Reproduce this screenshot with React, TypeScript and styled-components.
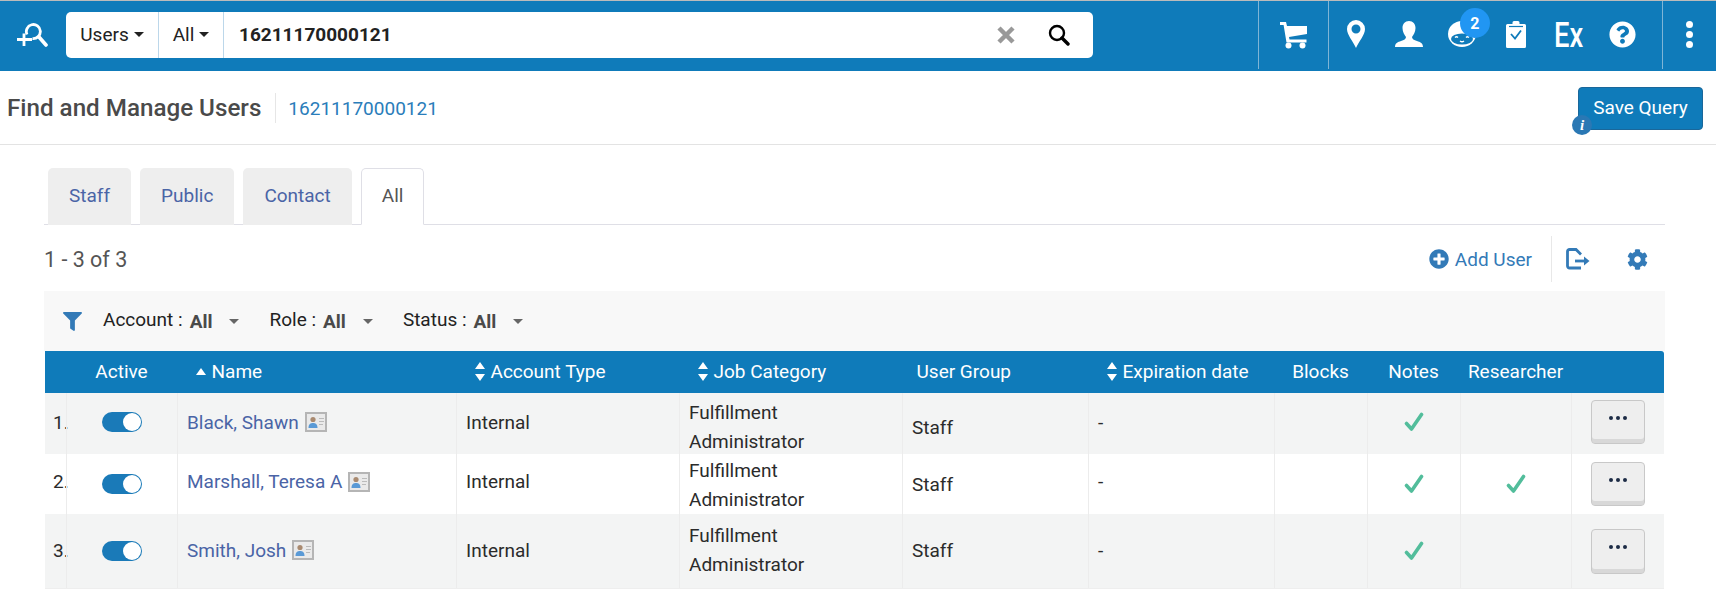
import React from "react";
import styled, { createGlobalStyle } from "styled-components";
import { FaCog, FaFilter, FaPlusCircle, FaQuestionCircle } from "react-icons/fa";

const blue = "#0f7bba";
const link = "#4a64a6";
const columns = "21px 111px 279px 223px 223px 186px 186px 93px 93px 111px 93px";

const GlobalStyle = createGlobalStyle`
  html, body {
    margin: 0;
    background: #fff;
    font-family: Roboto, "Liberation Sans", sans-serif;
    font-size: 19px;
    color: #333;
    overflow: hidden;
  }
`;

const TopBar = styled.header`
  display: flex;
  align-items: stretch;
  height: 70px;
  background: ${blue};
  border-top: 1px solid #bbb;
`;

const LogoCell = styled.div`
  width: 66px;
  display: flex;
  align-items: center;
  padding-left: 16px;
  box-sizing: border-box;
`;

const SearchBox = styled.div`
  align-self: flex-start;
  margin-top: 11px;
  width: 1027px;
  height: 46px;
  display: flex;
  align-items: stretch;
  background: #fff;
  border-radius: 5px;
`;

const ScopeSelect = styled.div<{ $width: number }>`
  width: ${(p) => p.$width}px;
  box-sizing: border-box;
  display: flex;
  align-items: center;
  justify-content: center;
  gap: 5px;
  padding-bottom: 2px;
  color: #222;
  border-right: 1px solid #bcd7ea;
`;

const SearchValue = styled.div`
  flex: 1;
  padding: 0 0 2px 15px;
  display: flex;
  align-items: center;
  font-weight: 700;
  color: #222;
`;

const SearchActions = styled.div`
  display: flex;
  align-items: center;
  gap: 33px;
  padding-right: 23px;
`;

const Spacer = styled.div`
  flex: 1;
`;

const BarCell = styled.div<{ $width: number; $divider?: boolean }>`
  position: relative;
  width: ${(p) => p.$width}px;
  display: flex;
  align-items: center;
  justify-content: center;
  color: #fff;
  margin-bottom: 2px;
  ${(p) => p.$divider && "border-left: 1px solid #7fb5d6; box-sizing: border-box;"}
`;

const BarGroup = styled.div`
  display: flex;
  padding-right: 13.4px;
  border-left: 1px solid #7fb5d6;
  margin-bottom: 2px;
`;

const Badge = styled.span`
  position: absolute;
  top: 7px;
  left: 24px;
  width: 30px;
  height: 30px;
  border-radius: 50%;
  background: #2196f3;
  color: #fff;
  font-size: 16px;
  font-weight: 700;
  display: flex;
  align-items: center;
  justify-content: center;
`;

const ExMark = styled.span`
  display: block;
  font-size: 35px;
  font-weight: 500;
  line-height: 35px;
  transform: scaleX(0.78);
  margin-top: 2px;
`;

const Dots = styled.div`
  display: flex;
  flex-direction: column;
  gap: 3px;
  margin-top: -2px;

  span {
    width: 7px;
    height: 7px;
    border-radius: 50%;
    background: #fff;
  }
`;

const SubHeader = styled.div`
  height: 73px;
  display: flex;
  align-items: center;
  padding: 0 13px 0 7px;
  border-bottom: 1px solid #e3e3e3;
`;

const Title = styled.h1`
  margin: 0;
  padding-right: 14px;
  font-size: 24.2px;
  font-weight: 500;
  line-height: 30px;
  color: #4a4a4a;
  border-right: 1px solid #e6e6e6;
`;

const QueryText = styled.span`
  margin: 2px 0 0 12px;
  flex: 1;
  color: #2a7dba;
`;

const SaveButton = styled.button`
  position: relative;
  width: 125px;
  height: 43px;
  margin-top: 1px;
  padding: 0 0 2px;
  background: ${blue};
  color: #fff;
  border: 1px solid #1a679a;
  border-radius: 4px;
  font: inherit;
`;

const InfoDot = styled.span`
  position: absolute;
  left: -7px;
  bottom: -6px;
  width: 20px;
  height: 20px;
  border-radius: 50%;
  background: #2a78b4;
  color: #fff;
  font: italic 700 15px/20px "Liberation Serif", serif;
  text-align: center;
`;

const Content = styled.main`
  margin: 23px 0 0 44px;
  width: 1621px;
`;

const TabBar = styled.nav`
  display: flex;
  gap: 9px;
  height: 56px;
  padding-left: 4px;
  border-bottom: 1px solid #dfdfe6;
`;

const Tab = styled.div<{ $active?: boolean }>`
  height: 57px;
  box-sizing: border-box;
  padding: 0 ${(p) => (p.$active ? 20 : 21)}px 2px;
  display: flex;
  align-items: center;
  border-radius: 5px 5px 0 0;
  background: ${(p) => (p.$active ? "#fff" : "#eee")};
  color: ${(p) => (p.$active ? "#555" : link)};
  border: ${(p) => (p.$active ? "1px solid #dfdfe6" : "0")};
  border-bottom: ${(p) => (p.$active ? "1px solid #fff" : "0")};
`;

const SummaryRow = styled.div`
  height: 64px;
  padding-top: 2px;
  display: flex;
  align-items: center;
  justify-content: space-between;
`;

const Count = styled.span`
  font-size: 21.5px;
  color: #555;
`;

const Actions = styled.div`
  display: flex;
  align-items: center;
  color: #337ab7;
`;

const AddUser = styled.span`
  display: flex;
  align-items: center;
  gap: 6px;
  padding-right: 19px;
  height: 46px;
  border-right: 1px solid #e8e8e8;
`;

const ActionIcon = styled.span<{ $width: number; $left?: number }>`
  width: ${(p) => p.$width}px;
  margin-left: ${(p) => p.$left ?? 0}px;
  display: flex;
  justify-content: center;
`;

const FilterBar = styled.div`
  height: 60px;
  box-sizing: border-box;
  display: flex;
  align-items: center;
  padding: 0 0 3px 19px;
  background: #f8f8f8;
  color: #222;
`;

const FilterIcon = styled(FaFilter)`
  margin: 3px 21px 0 0;
  color: #337ab7;
`;

const FilterItem = styled.div`
  display: flex;
  align-items: center;
  gap: 5px;
  margin-right: 30px;

  b {
    color: #4a4a4a;
    font-weight: 700;
    margin: 3px 0 0 2px;
  }
`;

const Caret = styled.span<{ $color?: string; $gap?: number; $drop?: number }>`
  display: inline-block;
  width: 0;
  height: 0;
  margin-left: ${(p) => p.$gap ?? 0}px;
  margin-top: ${(p) => p.$drop ?? 0}px;
  border-left: 5px solid transparent;
  border-right: 5px solid transparent;
  border-top: 5px solid ${(p) => p.$color ?? "#222"};
`;

const Table = styled.div`
  margin-left: 1px;
  width: 1619px;
`;

const HeadRow = styled.div`
  display: grid;
  grid-template-columns: ${columns};
  height: 42px;
  background: ${blue};
  border-radius: 0 3px 0 0;
  color: #fff;
`;

const HeadCell = styled.div<{ $center?: boolean; $pad?: number }>`
  display: flex;
  align-items: center;
  gap: 6px;
  white-space: nowrap;
  padding-bottom: 2px;
  justify-content: ${(p) => (p.$center ? "center" : "flex-start")};
  padding-left: ${(p) => p.$pad ?? 0}px;
`;

const BodyRow = styled.div<{ $height: number; $odd: boolean }>`
  display: grid;
  grid-template-columns: ${columns};
  height: ${(p) => p.$height}px;
  background: ${(p) => (p.$odd ? "#f3f4f4" : "#fff")};
  &:last-child {
    border-bottom: 1px solid #eee;
  }
`;

const Cell = styled.div<{ $center?: boolean; $shift?: number; $first?: boolean }>`
  min-width: 0;
  box-sizing: border-box;
  display: flex;
  align-items: center;
  justify-content: ${(p) => (p.$center ? "center" : "flex-start")};
  padding-left: ${(p) => (p.$center ? 0 : p.$first ? 8 : 9)}px;
  padding-top: ${(p) => Math.max(p.$shift ?? 0, 0)}px;
  padding-bottom: ${(p) => Math.max(-(p.$shift ?? 0), 0)}px;
  border-left: ${(p) => (p.$first ? "0" : "1px solid #ececec")};
  color: #2b2b2b;
  white-space: nowrap;
`;

const JobText = styled.div`
  line-height: 29px;
`;

const NameLink = styled.span`
  color: ${link};
  margin-right: 6px;
`;

const Toggle = styled.span`
  display: flex;
  justify-content: flex-end;
  align-items: center;
  width: 40px;
  height: 20px;
  box-sizing: border-box;
  padding-right: 1px;
  border-radius: 10px;
  background: #1a7ab8;

  &::after {
    content: "";
    width: 18px;
    height: 18px;
    border-radius: 50%;
    background: #fff;
  }
`;

const MoreButton = styled.button<{ $height: number }>`
  width: 54px;
  height: ${(p) => p.$height}px;
  padding: 0 0 8px;
  background: #eee;
  border: 1px solid #c8c8c8;
  border-radius: 4px;
  box-shadow: inset 0 -4px 0 #d8d8d8;
  display: flex;
  align-items: center;
  justify-content: center;
  gap: 3px;

  span {
    width: 4px;
    height: 4px;
    border-radius: 50%;
    background: #1c2b45;
  }
`;

const LogoIcon = () => (
  <svg width="32" height="26" viewBox="0 0 32 26" fill="none" stroke="#fff" strokeWidth="2.800">
    <path d="M1 16.500h15M8 10.500v12.500" />
    <path d="M11 11.500A7 7 0 1 1 16.500 15.500" />
    <path d="M23 14l7 8" strokeLinecap="round" strokeWidth="3.600" />
  </svg>
);

const ClearIcon = () => (
  <svg width="18" height="18" viewBox="0 0 18 18" stroke="#999" strokeWidth="4.500">
    <path d="M2 2l14 14M16 2L2 16" />
  </svg>
);

const SearchIcon = () => (
  <svg width="22" height="22" viewBox="0 0 22 22" fill="none" stroke="#000">
    <circle cx="9" cy="9" r="7" strokeWidth="2.400" />
    <path d="M14 14l6 6" strokeWidth="3.400" strokeLinecap="round" />
  </svg>
);

const CartIcon = () => (
  <svg width="28" height="28" viewBox="0 0 28 28" fill="#fff">
    <path d="M0 1h6l1 4h20v8l-18 3 .5 2.500h17v3H6.500L3.600 4H0z" />
    <circle cx="8.500" cy="24.500" r="3" />
    <circle cx="22.500" cy="24.500" r="3" />
  </svg>
);

const PinIcon = () => (
  <svg width="18" height="28" viewBox="0 0 18 28" fill="#fff">
    <path
      fillRule="evenodd"
      d="M9 0a9 9 0 0 1 9 9c0 6-6 12-9 19C6 21 0 15 0 9a9 9 0 0 1 9-9zm0 4.500a4.500 4.500 0 1 0 0 9 4.500 4.500 0 0 0 0-9z"
    />
  </svg>
);

const PersonIcon = () => (
  <svg width="28" height="26" viewBox="0 0 28 26" fill="#fff">
    <path d="M14 0c4 0 6.500 3 6.500 7 0 4-2 7-3.500 9 0 2 2 3 5 4 3 1 6 2 6 6H0c0-4 3-5 6-6 3-1 5-2 5-4-1.500-2-3.500-5-3.500-9 0-4 2.500-7 6.500-7z" />
  </svg>
);

const FaceIcon = () => (
  <svg width="28" height="26" viewBox="0 0 28 26">
    <ellipse cx="14" cy="13" rx="14" ry="13" fill="#fff" />
    <ellipse cx="14" cy="18" rx="11" ry="5.500" fill={blue} />
    <path d="M7 16.500q1.500-1.500 3 0M18 16.500q1.500-1.500 3 0M12 20q2 1.500 4 0" fill="none" stroke="#fff" strokeWidth="1.300" />
  </svg>
);

const ClipboardIcon = () => (
  <svg width="20" height="28" viewBox="0 0 20 28">
    <path fill="#fff" d="M1.500 4H6.500V2.500a1.500 1.500 0 0 1 1.500-1.500h4a1.500 1.500 0 0 1 1.500 1.500V4h5A1.500 1.500 0 0 1 20 5.500v21a1.500 1.500 0 0 1-1.500 1.500h-17A1.500 1.500 0 0 1 0 26.500v-21A1.500 1.500 0 0 1 1.500 4z" />
    <path d="M3 6.500h14" stroke={blue} strokeWidth="1.200" />
    <path d="M5 14l4 4.500 6-8" fill="none" stroke={blue} strokeWidth="1.800" />
  </svg>
);

const ExportIcon = () => (
  <svg width="24" height="22" viewBox="0 0 24 22" fill="none" stroke="#337ab7" strokeWidth="2.800">
    <path d="M15 20H3.500a2 2 0 0 1-2-2V3.500a2 2 0 0 1 2-2H10l5 5" />
    <path d="M9 13h10" />
    <path d="M18 8.500l5.500 4.500-5.500 4.500z" fill="#337ab7" stroke="none" />
  </svg>
);

const SortIcon = () => (
  <svg width="10" height="19" viewBox="0 0 10 19" fill="#fff">
    <path d="M5 0l5 7H0zM5 19l5-7H0z" />
  </svg>
);

const SortUp = () => (
  <svg width="10" height="7" viewBox="0 0 10 7" fill="#fff">
    <path d="M5 0l5 7H0z" />
  </svg>
);

const CardIcon = () => (
  <svg width="22" height="20" viewBox="0 0 22 20">
    <rect x="1" y="1" width="20" height="18" fill="#eaeaea" stroke="#b5b5b5" strokeWidth="2" />
    <circle cx="8" cy="7.500" r="2.600" fill="#a98a70" />
    <path d="M3.500 16c0-4 2-5 4.500-5s4.500 1 4.500 5z" fill="#5a9ad6" />
    <path d="M14 6.500h5M14 9.500h5M14 12.500h4" stroke="#bbb" />
  </svg>
);

const CheckIcon = () => (
  <svg width="20" height="20" viewBox="0 0 20 20" fill="none" stroke="#52bd9b" strokeWidth="3.600" strokeLinecap="round" strokeLinejoin="round">
    <path d="M2.500 11.500L7.500 17 17.500 2.500" />
  </svg>
);

const filters = ["Account", "Role", "Status"];

const users = [
  { name: "Black, Shawn", height: 61, odd: true, base: -5, text: -5, jobShift: 5, groupShift: 5, buttonHeight: 44, researcher: false },
  { name: "Marshall, Teresa A", height: 60, odd: false, base: -1, text: -5, jobShift: 1, groupShift: 1, buttonHeight: 44, researcher: true },
  { name: "Smith, Josh", height: 74, odd: true, base: 0, text: -2, jobShift: -3, groupShift: -2, buttonHeight: 45, researcher: false },
];

export default function App() {
  return (
    <>
      <GlobalStyle />
      <TopBar>
        <LogoCell>
          <LogoIcon />
        </LogoCell>
        <SearchBox>
          <ScopeSelect $width={93}>
            Users <Caret />
          </ScopeSelect>
          <ScopeSelect $width={65}>
            All <Caret />
          </ScopeSelect>
          <SearchValue>16211170000121</SearchValue>
          <SearchActions>
            <ClearIcon />
            <SearchIcon />
          </SearchActions>
        </SearchBox>
        <Spacer />
        <BarCell $width={70} $divider>
          <CartIcon />
        </BarCell>
        <BarGroup>
          <BarCell $width={53.2}>
            <PinIcon />
          </BarCell>
          <BarCell $width={53.2}>
            <PersonIcon />
          </BarCell>
          <BarCell $width={53.2}>
            <FaceIcon />
            <Badge>2</Badge>
          </BarCell>
          <BarCell $width={53.2}>
            <ClipboardIcon />
          </BarCell>
          <BarCell $width={53.2}>
            <ExMark>Ex</ExMark>
          </BarCell>
          <BarCell $width={53.2}>
            <FaQuestionCircle size={27} />
          </BarCell>
        </BarGroup>
        <BarCell $width={54} $divider>
          <Dots>
            <span />
            <span />
            <span />
          </Dots>
        </BarCell>
      </TopBar>

      <SubHeader>
        <Title>Find and Manage Users</Title>
        <QueryText>16211170000121</QueryText>
        <SaveButton>
          Save Query
          <InfoDot>i</InfoDot>
        </SaveButton>
      </SubHeader>

      <Content>
        <TabBar>
          <Tab>Staff</Tab>
          <Tab>Public</Tab>
          <Tab>Contact</Tab>
          <Tab $active>All</Tab>
        </TabBar>

        <SummaryRow>
          <Count>1 - 3 of 3</Count>
          <Actions>
            <AddUser>
              <FaPlusCircle size={20} />
              Add User
            </AddUser>
            <ActionIcon $width={52}>
              <ExportIcon />
            </ActionIcon>
            <ActionIcon $width={56} $left={5}>
              <FaCog size={21} />
            </ActionIcon>
          </Actions>
        </SummaryRow>

        <FilterBar>
          <FilterIcon size={19} />
          {filters.map((label) => (
            <FilterItem key={label}>
              {label} : <b>All</b>
              <Caret $color="#666" $gap={12} $drop={3} />
            </FilterItem>
          ))}
        </FilterBar>

        <Table>
          <HeadRow>
            <HeadCell />
            <HeadCell $center>Active</HeadCell>
            <HeadCell $pad={18.5}>
              <SortUp />
              Name
            </HeadCell>
            <HeadCell $pad={18.5}>
              <SortIcon />
              Account Type
            </HeadCell>
            <HeadCell $pad={18.5}>
              <SortIcon />
              Job Category
            </HeadCell>
            <HeadCell $pad={14.5}>User Group</HeadCell>
            <HeadCell $pad={18.5}>
              <SortIcon />
              Expiration date
            </HeadCell>
            <HeadCell $center>Blocks</HeadCell>
            <HeadCell $center>Notes</HeadCell>
            <HeadCell $center>Researcher</HeadCell>
            <HeadCell />
          </HeadRow>

          {users.map((u, i) => (
            <BodyRow key={u.name} $height={u.height} $odd={u.odd}>
              <Cell $first $shift={u.text}>
                {i + 1}.
              </Cell>
              <Cell $center $shift={u.base}>
                <Toggle />
              </Cell>
              <Cell $shift={u.text}>
                <NameLink>{u.name}</NameLink>
                <CardIcon />
              </Cell>
              <Cell $shift={u.text}>Internal</Cell>
              <Cell $shift={u.jobShift}>
                <JobText>
                  Fulfillment
                  <br />
                  Administrator
                </JobText>
              </Cell>
              <Cell $shift={u.groupShift}>Staff</Cell>
              <Cell $shift={u.text}>-</Cell>
              <Cell />
              <Cell $center $shift={u.base}>
                <CheckIcon />
              </Cell>
              <Cell $center $shift={u.base}>
                {u.researcher && <CheckIcon />}
              </Cell>
              <Cell $center $shift={u.base}>
                <MoreButton $height={u.buttonHeight}>
                  <span />
                  <span />
                  <span />
                </MoreButton>
              </Cell>
            </BodyRow>
          ))}
        </Table>
      </Content>
    </>
  );
}
